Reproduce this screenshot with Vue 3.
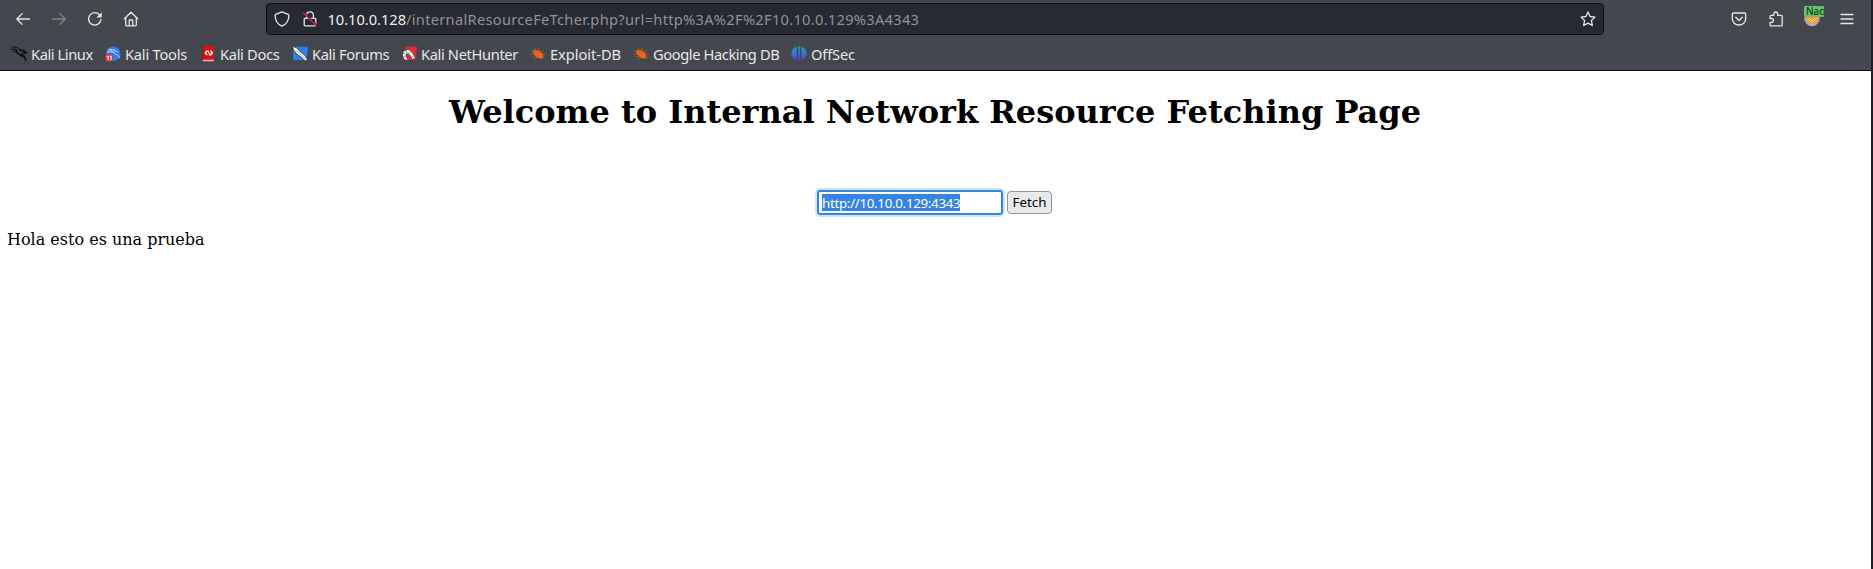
<script setup>
const bookmarks = [
  { label: 'Kali Linux', icon: 'dragon', width: 94, tracking: -0.42 },
  { label: 'Kali Tools', icon: 'tools', width: 95, tracking: -0.22 },
  { label: 'Kali Docs', icon: 'docs', width: 92, tracking: -0.32 },
  { label: 'Kali Forums', icon: 'forums', width: 109, tracking: -0.34 },
  { label: 'Kali NetHunter', icon: 'hunter', width: 129, tracking: -0.36 },
  { label: 'Exploit-DB', icon: 'bug', width: 103, tracking: -0.05 },
  { label: 'Google Hacking DB', icon: 'bug', width: 158, tracking: -0.4 },
  { label: 'OffSec', icon: 'offsec', width: 80, tracking: -0.15 }
]
const url = 'http://10.10.0.129:4343'
</script>

<template>
  <div class="window">
    <header class="chrome">
      <div class="toolbar">
        <nav class="nav">
          <svg class="ico" viewBox="0 0 16 16"><path d="M14.5 8H1.8M7.2 2.6 1.8 8l5.4 5.4" /></svg>
          <svg class="ico dim" viewBox="0 0 16 16"><path d="M1.5 8h12.7M8.8 2.6 14.2 8l-5.4 5.4" /></svg>
          <svg class="ico" viewBox="0 0 16 16"><path d="M13.9 8.6A6.2 6.2 0 1 1 12.3 3.6" /><path class="solid" d="M14.7 1.2v5.2H9.4z" /></svg>
          <svg class="ico" viewBox="0 0 16 16"><path d="M1.3 7.8 8 1.2l6.7 6.6M2.7 6.8v7a1 1 0 0 0 1 1h8.6a1 1 0 0 0 1-1v-7M6.2 14.6V9.8a.8.8 0 0 1 .8-.8h2a.8.8 0 0 1 .8.8v4.8" /></svg>
        </nav>
        <div class="urlbar">
          <svg class="ico shield" viewBox="0 0 16 16"><path d="M8 .9 14.1 3.3c.6.3.8.7.8 1.2-.1 5-2.5 8.8-6.9 10.7C3.600 13.300 1.200 9.500 1.100 4.500c0-.5.2-.9.8-1.200z" /></svg>
          <svg class="ico lock" viewBox="0 0 16 16"><path d="M4.600 7V4.300a3.400 3.400 0 0 1 6.800 0V7M3 7.400h10a.8.8 0 0 1 .8.8v5.600a1 1 0 0 1-1 1H3.200a1 1 0 0 1-1-1V8.200a.8.8 0 0 1 .8-.8z" /><path class="gap" d="M2.400 1.600 15.200 14.400" /><path class="slash" d="M1.200 1.800 14.200 14.800" /></svg>
          <span class="address"><b>10.10.0.128</b>/internalResourceFeTcher.php?url=http%3A%2F%2F10.10.0.129%3A4343</span>
          <svg class="ico star" viewBox="0 0 16 16"><path d="m8 1 2.100 4.500 4.900.6-3.600 3.400.9 5L8 12.100l-4.300 2.400.9-5L1 6.100l4.900-.6z" /></svg>
        </div>
        <div class="actions">
          <svg class="ico" viewBox="0 0 16 16"><path d="M2.300 2h11.400a1 1 0 0 1 1 1v4.700a6.700 6.300 0 0 1-13.400 0V3a1 1 0 0 1 1-1zM4.700 6.300 8 9.500l3.300-3.200" /></svg>
          <svg class="ico" viewBox="0 0 16 16"><path d="M5.800 4.300V2.900a1.900 1.900 0 0 1 3.800 0v1.400h3.600a1 1 0 0 1 1 1v8.600a1 1 0 0 1-1 1H3.100a1 1 0 0 1-1-1v-2.600h1.400a1.900 1.900 0 0 0 0-3.800H2.100V5.300a1 1 0 0 1 1-1z" /></svg>
          <div class="proxy">
            <svg viewBox="0 0 16 16"><circle cx="8" cy="7.500" r="7.700" fill="#aeb1b7" /><path d="M2 4.500h12c.8 5.500-2 8.500-6 8.500S1.200 10 2 4.500z" fill="#ef932c" /><path d="M2.500 7.500 8 12l5.200-5M5 7l3 2.500L11 7" fill="none" stroke="#ffd6a1" stroke-width="1" /></svg>
            <span>Nao</span>
          </div>
          <svg class="ico menu" viewBox="0 0 16 16"><path d="M2 3.500h12M2 8h12M2 12.500h12" /></svg>
        </div>
      </div>
      <div class="bookmarks">
        <div v-for="b in bookmarks" :key="b.label" class="bookmark" :style="{ width: b.width + 'px', letterSpacing: b.tracking + 'px' }">
          <svg v-if="b.icon === 'dragon'" viewBox="0 0 16 16" class="fav"><path d="M.5 1.200C4 .5 7 1.500 9.500 3.500M0 3.700c3-1 5-.5 6.500.5M1.500 6c1.500-.7 2.500-.7 4-.5" fill="none" stroke="#0c0d10" stroke-width="1" /><path d="M5 3c-.2 3 1.300 5 4.700 5.200 3.300.2 4.500 2.300 5 6.800M8 4.200l4.500.3L15 7l-3.500-.5M9 8.500c1 1.600 2.500 2 4 2.300" fill="none" stroke="#0c0d10" stroke-width="1.600" /></svg>
          <svg v-else-if="b.icon === 'tools'" viewBox="0 0 16 16" class="fav"><circle cx="8.300" cy="7.700" r="7.200" fill="#367bf0" /><path d="M3 4c3-1 6-.6 8 1l2 1M2 6.500c3-1.300 5-.8 7-.5 0 3 4.500 2 5.500 6M5 3.500c1 2 2 2 4 2.500" fill="none" stroke="#c6dcff" stroke-width="1" /><circle cx="3.900" cy="11.700" r="3.900" fill="#e32a32" /><path d="M1.500 10.300h1.700v3.900M4.500 10.300h1.500v3.900" fill="none" stroke="#fff" stroke-width="1.100" /></svg>
          <svg v-else-if="b.icon === 'docs'" viewBox="0 0 16 16" class="fav"><path d="M2.200.2h11.700v15.600H2.200z" fill="#de1015" /><path d="M2.200.2h1.600v14H2.200z" fill="#96181c" /><path d="M2.700 13.700h11.200v1.600H2.700z" fill="#c9c4c3" /><path d="M7.200 4.700 5.200 7l2 2M10.500 4.700l2 2.300-2 2M7.700 4.500l2.500 5" fill="none" stroke="#fff" stroke-width="1.300" /></svg>
          <svg v-else-if="b.icon === 'forums'" viewBox="0 0 16 16" class="fav"><path d="M1.500.8H16L14.500 14H1z" fill="#2a82f2" /><path d="M0 .3 4.800 1.800l4 4.400 4.200 3 3 6-3.800-1L9 11 5.500 9 2 4.500z" fill="#f4f1e9" stroke="#19263b" stroke-width=".7" /><path d="m4 4 5 4.500 4 4.500" fill="none" stroke="#999" stroke-width=".6" /></svg>
          <svg v-else-if="b.icon === 'hunter'" viewBox="0 0 16 16" class="fav"><path d="M5 .8h11L14.500 14H2z" fill="#ee2732" /><path d="M3.300 13.500C-.5 9 2 3.600 6.800 3.500c3 0 4.500 2.500 7.700 8l-3 2.500C9 9 7.500 7 5.700 8c-1.500 1-.5 3 1.500 5.500" fill="#f7f4f1" stroke="#292b32" stroke-width=".8" /><path d="m1.500 7 3 1M5 4l1 3M10 5 8 7.500m5.300 2-3 2M1 11l3-.5" fill="none" stroke="#555" stroke-width=".6" /></svg>
          <svg v-else-if="b.icon === 'bug'" viewBox="0 0 16 16" class="fav"><path d="M3 5c2.500-2 6-1.200 8.500 1.500C14 9 13.500 12 12 12.600 8 13 3 9.500 3 5z" fill="#ed6414" /><path d="M1 4.500 5 6M4.500 2l2 4M9 1.700V6M11 6l3-2M12 8h3.500M3.500 8.500.5 8M5.500 10l-3 1M8 11l-3.500 2.500M12 10l3 2.500" fill="none" stroke="#bd642f" stroke-width=".75" /></svg>
          <svg v-else viewBox="0 0 16 16" class="fav"><defs><linearGradient id="sec" x1="0" y1="0" x2="0" y2="1"><stop offset="0" stop-color="#13a6ba" /><stop offset=".45" stop-color="#3479d2" /><stop offset="1" stop-color="#6a26c9" /></linearGradient></defs><path d="M5.700.8v13.400C-1.600 12-1.600 3 5.700.8zM10.300.8v13.400C17.600 12 17.600 3 10.300.8zM7.200.3h1.600v15.500H7.200z" fill="url(#sec)" /></svg>
          <span>{{ b.label }}</span>
        </div>
      </div>
    </header>
    <main class="page">
      <h1>Welcome to Internal Network Resource Fetching Page</h1>
      <form class="fetcher" @submit.prevent>
        <div class="field"><span>{{ url }}</span></div>
        <button type="submit">Fetch</button>
      </form>
      <p>Hola esto es una prueba</p>
    </main>
  </div>
</template>

<style>
body { margin: 0; background: #fff; }
</style>

<style scoped>
.window { box-sizing: border-box; width: 1873px; height: 569px; overflow: hidden; background: #fff; border-right: 2px solid #1c1d26; }
.chrome { box-sizing: border-box; height: 71px; background: #44474e; border-bottom: 1px solid #0d0d11; color: #e8e8e6; font: 14.667px "Noto Sans", sans-serif; }
.toolbar { display: flex; height: 38px; align-items: center; }
.nav { display: flex; gap: 20px; width: 251px; padding-left: 15px; flex: none; }
.ico { width: 16px; height: 16px; flex: none; fill: none; stroke: #e8e8e6; stroke-width: 1.3; stroke-linecap: round; stroke-linejoin: round; }
.dim { stroke: #85878b; }
.solid { fill: #e8e8e6; stroke: none; }
.gap { stroke: #272933; }
.slash { stroke: #ed1846; }
.urlbar { box-sizing: border-box; display: flex; align-items: center; width: 1338px; height: 32px; border: 1px solid #0d0e12; border-radius: 4px; background: #272933; flex: none; padding: 0 7px; }
.lock { margin-left: 12px; }
.address { margin-left: 9.500px; flex: 1; white-space: nowrap; color: #929397; line-height: 20px; letter-spacing: 0.28px; }
.address b { font-weight: 400; color: #f0f0ee; letter-spacing: -0.03px; }
.actions { display: flex; gap: 20.500px; margin-left: 127px; align-items: center; }
.proxy { position: relative; width: 16px; height: 16px; }
.proxy svg { display: block; width: 16px; height: 16px; }
.proxy span { position: absolute; left: 0; top: -5px; width: 18px; height: 11px; padding-left: 2px; overflow: hidden; border-radius: 1px; background: #61c766; color: #122216; font-size: 10px; line-height: 11px; }
.menu { margin-left: -2px; }
.bookmarks { display: flex; align-items: center; height: 32px; padding-left: 11px; box-sizing: border-box; }
.bookmark { display: flex; align-items: center; gap: 4px; flex: none; white-space: nowrap; line-height: 20px; }
.fav { width: 16px; height: 16px; flex: none; }
.page { box-sizing: border-box; padding: 22px 8px 0 7px; color: #000; font-family: "DejaVu Serif", serif; }
h1 { margin: 0; height: 38px; line-height: 38px; font-size: 32px; text-align: center; white-space: nowrap; }
.fetcher { display: flex; justify-content: center; align-items: center; gap: 4px; height: 26px; margin: 58px 1px 0 0; font: 13.333px "Noto Sans", sans-serif; }
.field { box-sizing: border-box; width: 186px; height: 25px; border: 2px solid #3584e4; border-radius: 3px; box-shadow: 0 0 0 2px #cde6ff; padding: 2px 3px; }
.field span { display: inline-block; height: 17px; line-height: 18px; background: #3584e4; color: #fff; vertical-align: top; letter-spacing: -0.3px; }
button { box-sizing: border-box; width: 45px; height: 23px; padding: 0; border: 1px solid #8f8f9d; border-radius: 4px; background: #e9e9ed; color: #000; font: inherit; line-height: 21px; }
p { margin: 15px 0 0; font-size: 16px; line-height: 19px; }
</style>
